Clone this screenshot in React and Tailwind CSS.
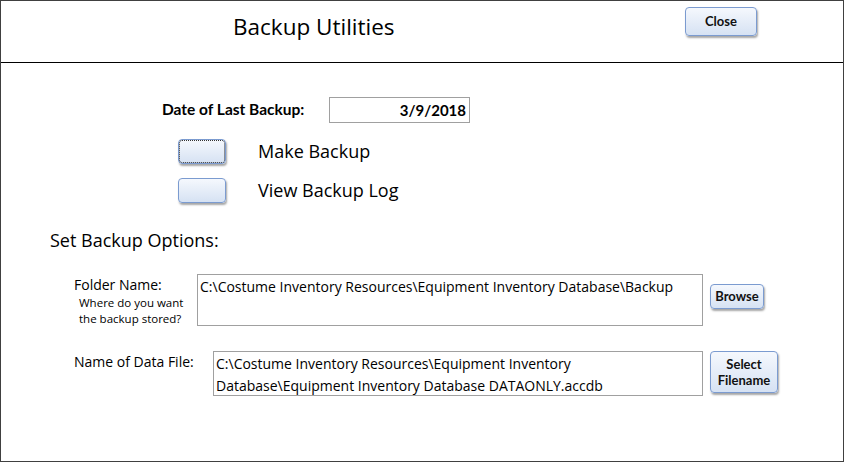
export default function App() {
  const btn =
    "rounded-[4px] border border-[#7b9bd0] bg-gradient-to-b from-[#f5f8fd] to-[#d6e2f3] shadow-[1px_2px_2px_rgba(0,0,0,0.35)]";
  const seg = { fontFamily: '"Open Sans", "Noto Sans", sans-serif' };
  const cal = { fontFamily: 'Lato, "Noto Sans", sans-serif' };
  return (
    <div className="w-[844px] h-[462px] border border-[#404040] bg-white text-black flex flex-col overflow-hidden" style={seg}>
      <div className="h-[62px] border-b border-black flex shrink-0">
        <div className="w-[232px]" />
        <div className="pt-[11px] text-[22.5px] leading-[30px]">Backup Utilities</div>
        <div className="flex-1" />
        <button className={`${btn} mt-[6px] mr-[86px] w-[72px] h-[29px] text-[13px] font-bold text-[#111]`} style={cal}>
          Close
        </button>
      </div>
      <div className="flex flex-col pt-[34px]">
        <div className="flex items-center h-[26px]">
          <div className="w-[161px]" />
          <div className="w-[167px] text-[15.5px] font-bold" style={cal}>Date of Last Backup:</div>
          <div className="w-[141px] h-[26px] border border-[#a0a0a0] flex items-center justify-end pr-[3px] text-[15px] font-bold" style={cal}>
            3/9/2018
          </div>
        </div>
        <div className="flex items-center h-[25px] mt-[16px]">
          <div className="w-[177px]" />
          <button className={`${btn} w-[48px] h-[25px] outline-1 outline-dotted outline-[#333] -outline-offset-2`} />
          <div className="ml-[32px] text-[18px] leading-[25px]">Make Backup</div>
        </div>
        <div className="flex items-center h-[25px] mt-[14px]">
          <div className="w-[177px]" />
          <button className={`${btn} w-[48px] h-[25px]`} />
          <div className="ml-[32px] text-[18px] leading-[25px]">View Backup Log</div>
        </div>
        <div className="ml-[49px] mt-[24px] text-[18px] leading-[27px]">Set Backup Options:</div>
        <div className="flex mt-[20px]">
          <div className="w-[73px]" />
          <div className="w-[123px] flex flex-col">
            <div className="text-[14px] leading-[20px] mt-[1px]">Folder Name:</div>
            <div className="text-[11.5px] leading-[16px] ml-[5px]">Where do you want<br />the backup stored?</div>
          </div>
          <div className="w-[506px] h-[52px] border border-[#a0a0a0] pl-[2px] pt-[1px] text-[14px] leading-[22px]">
            C:\Costume Inventory Resources\Equipment Inventory Database\Backup
          </div>
          <button className={`${btn} ml-[7px] mt-[10px] w-[54px] h-[25px] text-[13px] font-bold text-[#111]`} style={cal}>
            Browse
          </button>
        </div>
        <div className="flex mt-[24px]">
          <div className="w-[73px]" />
          <div className="w-[139px] text-[14px] leading-[20px] mt-[1px]">Name of Data File:</div>
          <div className="w-[490px] h-[45px] border border-[#a0a0a0] pl-[2px] pt-[1px] text-[14px] leading-[22px]">
            C:\Costume Inventory Resources\Equipment Inventory<br />Database\Equipment Inventory Database DATAONLY.accdb
          </div>
          <button className={`${btn} ml-[7px] w-[68px] h-[42px] text-[13px] leading-[16px] font-bold text-[#111] flex flex-col items-center justify-center`} style={cal}>
            <span>Select</span>
            <span>Filename</span>
          </button>
        </div>
      </div>
    </div>
  );
}
